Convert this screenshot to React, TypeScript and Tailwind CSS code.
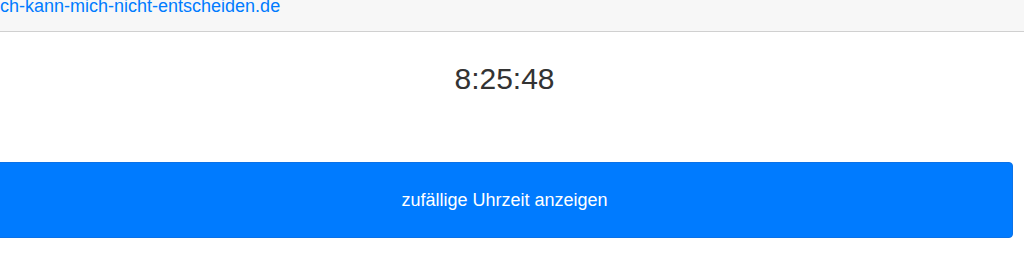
export default function App() {
  return (
    <div className="w-[1024px] h-[260px] overflow-hidden bg-white font-['Liberation_Sans',Arial,sans-serif]">
      {/* Header */}
      <div className="h-[32px] bg-[#f7f7f7] border-b border-[#d0d0d0]">
        <a href="#" className="block text-[18px] leading-[13px] text-[#007bff]">
          ch-kann-mich-nicht-entscheiden.de
        </a>
      </div>

      <div className="-ml-[4px] w-[1017px]">
        <div className="mt-[29px] text-center text-[30px] leading-[36px] text-[#333]">8:25:48</div>
        <button className="mt-[65px] flex h-[76px] w-full items-center justify-center rounded-[4px] border border-[#0a72e8] bg-[#007bff] text-[18px] text-white">
          zufällige Uhrzeit anzeigen
        </button>
      </div>
    </div>
  );
}
